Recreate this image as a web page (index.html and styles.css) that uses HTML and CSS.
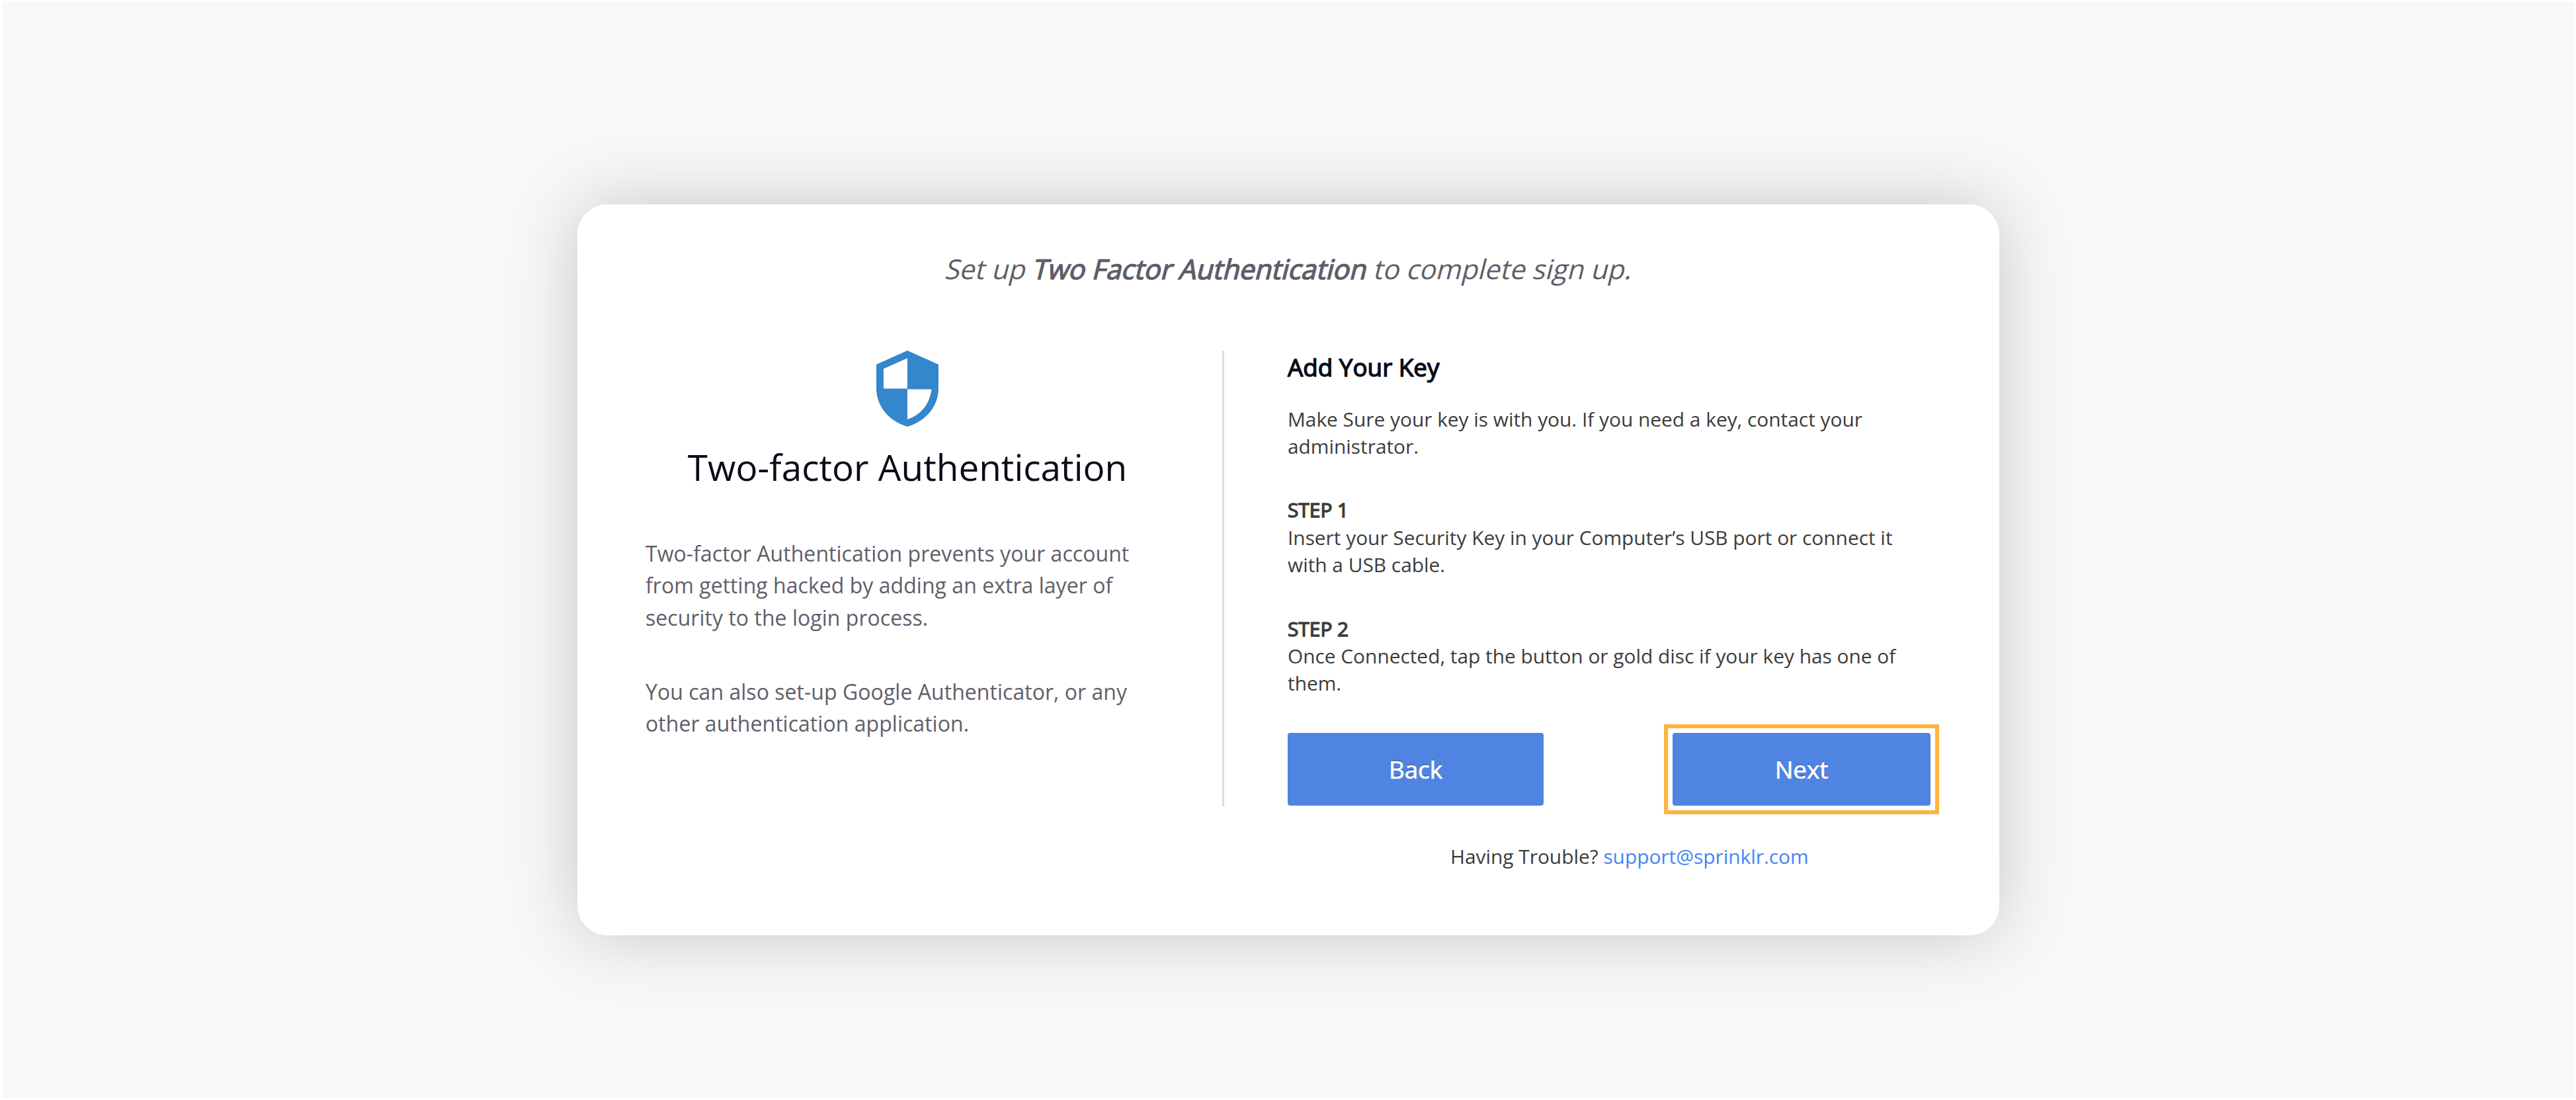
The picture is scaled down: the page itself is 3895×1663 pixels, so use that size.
FILE: index.html
```
<!DOCTYPE html>
<html lang="en">
<head>
    <meta charset="UTF-8">
    <meta name="viewport" content="width=device-width, initial-scale=1.0">
    <title>Two-factor Authentication</title>
    <link rel="stylesheet" href="styles.css">
</head>
<body>
    <div class="card">
        <p class="heading">Set up <span class="strong">Two Factor Authentication</span> to complete sign up.</p>
        <div class="columns">
            <div class="intro">
                <svg class="shield" viewBox="0 0 94 115">
                    <path fill="#3487ca" d="M47 0L94 21V57C94 84 75 107 47 115C19 107 0 84 0 57V21Z"/>
                    <path fill="#fff" d="M47 11.5V57.5H11V27.5Z"/>
                    <path fill="#fff" d="M47 58.5H83.5C81 80 68 97 47 104Z"/>
                </svg>
                <h1>Two-factor Authentication</h1>
                <p>Two-factor Authentication prevents your account from getting hacked by adding an extra layer of security to the login process.</p>
                <p>You can also set-up Google Authenticator, or any other authentication application.</p>
            </div>
            <div class="steps">
                <h2 class="strong">Add Your Key</h2>
                <p>Make Sure your key is with you. If you need a key, contact your administrator.</p>
                <h3 class="strong">STEP 1</h3>
                <p>Insert your Security Key in your Computer’s USB port or connect it with a USB cable.</p>
                <h3 class="strong">STEP 2</h3>
                <p>Once Connected, tap the button or gold disc if your key has one of them.</p>
                <div class="buttons">
                    <button>Back</button>
                    <div class="highlight">
                        <button>Next</button>
                    </div>
                </div>
            </div>
        </div>
        <div class="help">Having Trouble? <a href="mailto:support@sprinklr.com">support@sprinklr.com</a></div>
    </div>
</body>
</html>
```
FILE: styles.css
```
* {
    box-sizing: border-box;
}
html {
    height: 100%;
}
body {
    font-family: "Open Sans", sans-serif;
    display: flex;
    justify-content: center;
    align-items: flex-start;
    height: 100%;
    margin: 0;
    padding: 307px 1px 0 0;
    background-color: #f8f8fa;
    border: solid #fff;
    border-width: 2px 2px 3px 4px;
    overflow: hidden;
}
h1, h2, h3, p {
    margin: 0;
    font-weight: 400;
}
.card {
    width: 2150px;
    height: 1105px;
    padding: 70px 102px 0 103px;
    background: #fff;
    border-radius: 45px;
    box-shadow: 0 0 110px rgba(0, 0, 0, 0.2);
}
.strong {
    -webkit-text-stroke: 1.4px currentColor;
}
/* slanted upright face, the real italic has different letterforms */
.heading {
    padding-left: 4px;
    font-size: 41.3px;
    line-height: 54px;
    text-align: center;
    color: #5d5e69;
    transform: skewX(-14deg);
}
.columns {
    display: flex;
    height: 689px;
    margin-top: 97px;
}
.intro {
    width: 875px;
    padding-right: 80px;
    border-right: 3px solid #dcdcdf;
    color: #5f606b;
}
.shield {
    display: block;
    width: 94px;
    height: 115px;
    margin: 0 auto;
}
.intro h1 {
    margin-top: 23px;
    font-size: 54.9px;
    line-height: 76px;
    text-align: center;
    color: #0b0b19;
}
.intro p {
    width: 750px;
    margin-top: 69px;
    font-size: 32.1px;
    line-height: 48.3px;
}
.intro p + p {
    margin-top: 64px;
}
.steps {
    width: 972px;
    margin-left: 96px;
    color: #3c3c3c;
}
.steps h2 {
    font-size: 36.8px;
    line-height: 50px;
    color: #0b0b19;
}
.steps h3, .steps p {
    font-size: 29.85px;
    line-height: 41.3px;
}
.steps h2 + p {
    margin-top: 32.5px;
}
.steps h3 {
    margin-top: 55.3px;
}
.buttons {
    display: flex;
    justify-content: space-between;
    align-items: center;
    height: 110px;
    margin-top: 55px;
}
.buttons button {
    display: block;
    width: 387px;
    height: 110px;
    padding: 0;
    border: none;
    border-radius: 4px;
    background: #4f84e2;
    font-family: inherit;
    font-size: 36.8px;
    color: #fff;
    -webkit-text-stroke: 0.7px #fff;
    text-shadow: 0 -2px 0 rgba(0, 0, 0, 0.25);
}
.highlight {
    margin-right: -13px;
    padding: 7px;
    border: 6px solid #ffb43c;
}
.highlight button {
    width: 390px;
}
.help {
    margin: 55px 0 0 1217px;
    font-size: 29.85px;
    line-height: 41px;
    color: #3c3c3c;
}
.help a {
    color: #4285f4;
    text-decoration: none;
}
```
